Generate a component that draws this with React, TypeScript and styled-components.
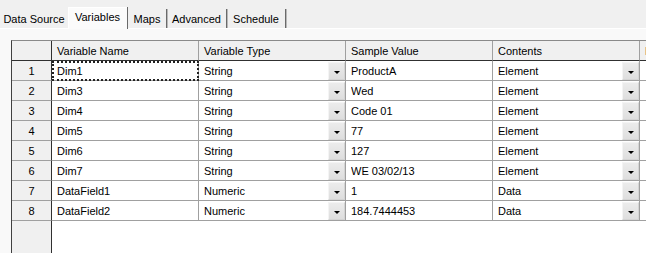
import React from "react";
import styled, { createGlobalStyle } from "styled-components";

const GlobalStyle = createGlobalStyle`
  html, body { margin: 0; padding: 0; }
  body {
    font-family: "Liberation Sans", Arial, sans-serif;
    font-size: 11px;
    color: #000;
    background: #f9f9f9;
  }
`;

const Window = styled.div`
  width: 646px;
  height: 253px;
  overflow: hidden;
  background: #f9f9f9;
  display: flex;
  flex-direction: column;
`;

const TabStrip = styled.div`
  height: 28px;
  flex: none;
  display: flex;
  align-items: flex-end;
  background: #f0f0f0;
  border-bottom: 1px solid #ffffff;
`;

const Tab = styled.div<{ $width: number; $active?: boolean; $noSep?: boolean }>`
  width: ${(p) => p.$width}px;
  box-sizing: border-box;
  height: ${(p) => (p.$active ? 22 : 19)}px;
  margin-bottom: ${(p) => (p.$active ? -1 : 0)}px;
  display: flex;
  align-items: center;
  justify-content: center;
  padding-bottom: ${(p) => (p.$active ? 2 : 0)}px;
  white-space: nowrap;
  background: ${(p) => (p.$active ? "#fbfbfb" : "transparent")};
  border-right: ${(p) => (p.$noSep ? "none" : "1px solid #6a6a6a")};
  box-shadow: ${(p) =>
    p.$active ? "inset 1px 1px 0 #ffffff" : p.$noSep ? "none" : "1px 0 0 #b8b8b8"};
  position: relative;
  z-index: ${(p) => (p.$active ? 1 : 0)};
`;

const Page = styled.div`
  flex: 1;
  min-height: 0;
  padding: 11px 0 0 11px;
  overflow: hidden;
  display: flex;
  flex-direction: column;
`;

const GridFrame = styled.div`
  flex: 1;
  display: grid;
  grid-template-columns: 40px 147px 147px 147px 147px 147px;
  grid-template-rows: repeat(9, 20px) 1fr;
  border-left: 1px solid #404040;
  border-top: 1px solid #8a8a8a;
  background: #ffffff;
  width: max-content;
`;

const HeaderCell = styled.div<{ $corner?: boolean }>`
  box-sizing: border-box;
  background: #f0f0f0;
  border-right: 1px solid ${(p) => (p.$corner ? "#303030" : "#a0a0a0")};
  border-bottom: 1px solid #303030;
  padding: 0 5px;
  display: flex;
  align-items: center;
  white-space: nowrap;
  overflow: hidden;
`;

const RowHeader = styled.div<{ $filler?: boolean }>`
  box-sizing: border-box;
  background: #f0f0f0;
  border-right: 1px solid #303030;
  border-bottom: ${(p) => (p.$filler ? "none" : "1px solid #a0a0a0")};
  display: flex;
  align-items: center;
  justify-content: center;
`;

const Cell = styled.div<{ $focused?: boolean }>`
  box-sizing: border-box;
  background: #ffffff;
  border-right: 1px solid #a0a0a0;
  border-bottom: 1px solid #a0a0a0;
  padding: 0 0 0 5px;
  display: flex;
  align-items: center;
  white-space: nowrap;
  overflow: hidden;
  outline: ${(p) => (p.$focused ? "2px dotted #222" : "none")};
  outline-offset: -2px;
`;

const CellText = styled.span`
  flex: 1;
  overflow: hidden;
`;

const DropButton = styled.div`
  flex: none;
  width: 17px;
  align-self: stretch;
  margin: 1px 0 0 0;
  box-sizing: border-box;
  background: linear-gradient(#ececec, #dedede);
  border: 1px solid #d4d4d4;
  border-top-color: #f4f4f4;
  border-left-color: #f4f4f4;
  display: flex;
  align-items: center;
  justify-content: center;
  &::after {
    content: "";
    width: 0;
    height: 0;
    margin-top: 2px;
    border-left: 3px solid transparent;
    border-right: 3px solid transparent;
    border-top: 3px solid #000;
  }
`;

const FillerCell = styled.div`
  background: #ffffff;
`;

type Row = { name: string; type: string; sample: string; contents: string };

const rows: Row[] = [
  { name: "Dim1", type: "String", sample: "ProductA", contents: "Element" },
  { name: "Dim3", type: "String", sample: "Wed", contents: "Element" },
  { name: "Dim4", type: "String", sample: "Code 01", contents: "Element" },
  { name: "Dim5", type: "String", sample: "77", contents: "Element" },
  { name: "Dim6", type: "String", sample: "127", contents: "Element" },
  { name: "Dim7", type: "String", sample: "WE 03/02/13", contents: "Element" },
  { name: "DataField1", type: "Numeric", sample: "1", contents: "Data" },
  { name: "DataField2", type: "Numeric", sample: "184.7444453", contents: "Data" },
];

const tabs = [
  { label: "Data Source", width: 68, noSep: true },
  { label: "Variables", width: 60, active: true },
  { label: "Maps", width: 39 },
  { label: "Advanced", width: 60 },
  { label: "Schedule", width: 59 },
];

export default function App() {
  return (
    <>
      <GlobalStyle />
      <Window>
        <TabStrip>
          {tabs.map((t) => (
            <Tab key={t.label} $width={t.width} $active={t.active} $noSep={t.noSep}>
              {t.label}
            </Tab>
          ))}
        </TabStrip>
        <Page>
          <GridFrame>
            <HeaderCell $corner />
            <HeaderCell>Variable Name</HeaderCell>
            <HeaderCell>Variable Type</HeaderCell>
            <HeaderCell>Sample Value</HeaderCell>
            <HeaderCell>Contents</HeaderCell>
            <HeaderCell>Format</HeaderCell>
            {rows.map((r, i) => (
              <React.Fragment key={r.name}>
                <RowHeader>{i + 1}</RowHeader>
                <Cell $focused={i === 0}>
                  <CellText>{r.name}</CellText>
                </Cell>
                <Cell>
                  <CellText>{r.type}</CellText>
                  <DropButton />
                </Cell>
                <Cell>
                  <CellText>{r.sample}</CellText>
                </Cell>
                <Cell>
                  <CellText>{r.contents}</CellText>
                  <DropButton />
                </Cell>
                <Cell />
              </React.Fragment>
            ))}
            <RowHeader $filler />
            <FillerCell />
            <FillerCell />
            <FillerCell />
            <FillerCell />
            <FillerCell />
          </GridFrame>
        </Page>
      </Window>
    </>
  );
}
